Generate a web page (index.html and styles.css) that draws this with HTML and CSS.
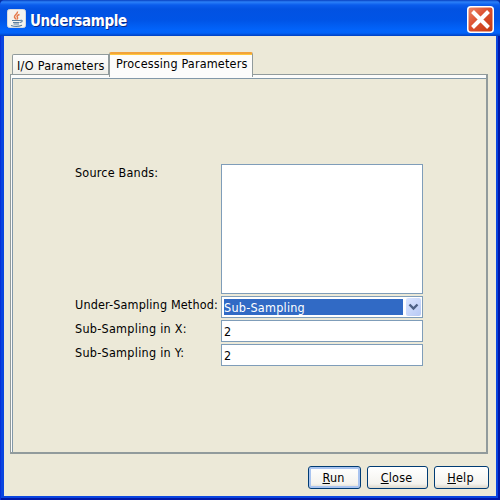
FILE: index.html
```html
<!DOCTYPE html>
<html lang="en">
<head>
<meta charset="utf-8">
<title>Undersample</title>
<link rel="stylesheet" href="styles.css">
</head>
<body>
<div class="window">
  <header class="titlebar">
    <svg class="app-icon" viewBox="0 0 19 19" width="19" height="19">
      <rect x=".5" y=".5" width="18" height="18" rx="2" fill="#f4f3ef" stroke="#d5d9df"/>
      <path d="M10.500 2.500C11 5 7 6 7.500 8c.2 1 1.200 1.500 1.200 2.500M12.500 5.500C10 6.500 9.500 7.500 10.500 8.500c.5.8-.2 1.500-.8 2" fill="none" stroke="#e5794a" stroke-width="1.500"/>
      <path d="M5 11.500h8M13 11.500c3-1 3 1.500 0 2M6 13.500h6.500M6.500 15h5.500M4 16.500c3 1 8 1 11-.3" fill="none" stroke="#5c7f9e" stroke-width="1.100"/>
    </svg>
    <h1 class="title">Undersample</h1>
    <button class="close" aria-label="Close window">
      <svg viewBox="0 0 27 27" width="27" height="27">
        <defs><linearGradient id="red" x2="1" y2="1"><stop stop-color="#ed8a6c"/><stop offset=".45" stop-color="#dc5030"/><stop offset="1" stop-color="#c23a10"/></linearGradient></defs>
        <rect x=".75" y=".75" width="25.500" height="25.500" rx="3" fill="url(#red)" stroke="#fff" stroke-width="1.500"/>
        <path d="M5.500 5.500l16 16M21.500 5.500l-16 16" stroke="#fff" stroke-width="4"/>
      </svg>
    </button>
  </header>
  <main class="content">
    <nav class="tabs">
      <div class="tab">I/O Parameters</div>
      <div class="tab active">Processing Parameters</div>
    </nav>
    <section class="pane">
      <form class="form">
        <label>Source Bands:</label>
        <div class="field list"></div>
        <label class="method">Under-Sampling Method:</label>
        <div class="field combo">
          <span class="selected">Sub-Sampling</span>
          <span class="arrow"><svg viewBox="0 0 15 18" width="15" height="18"><path d="M3.500 6.500l4 4 4-4" fill="none" stroke="#4d6185" stroke-width="2.400"/></svg></span>
        </div>
        <label class="axis">Sub-Sampling in X:</label>
        <div class="field">2</div>
        <label class="axis">Sub-Sampling in Y:</label>
        <div class="field">2</div>
      </form>
    </section>
    <footer class="actions">
      <button class="btn run default"><u>R</u>un</button>
      <button class="btn shut"><u>C</u>lose</button>
      <button class="btn help"><u>H</u>elp</button>
    </footer>
  </main>
</div>
</body>
</html>
```
FILE: styles.css
```css
* { box-sizing: border-box; }
body { margin: 0; background: #0831a0; font: 12.5px/16px "DejaVu Sans Condensed", "DejaVu Sans", sans-serif; font-stretch: condensed; color: #000; }
.window {
  width: 500px; height: 500px; display: flex; flex-direction: column;
  background: #0a45e0; border-radius: 5px 5px 0 0; overflow: hidden;
  padding: 0 4px 4px;
  box-shadow: inset 1px 0 #0831d9, inset -2px 0 #0018a8, inset 0 -2px #0018a8;
}
.titlebar {
  height: 36px; margin: 0 -4px; padding: 4px 6px 0 7px; display: flex; align-items: center;
  background: linear-gradient(#0840c0 0, #2b80f8 2px, #0a5cec 5px, #0252e2 9px, #0054e6 20px, #0264fb 30px, #0263f8 33px, #003fc0 36px);
}
.app-icon { margin: -3px 0 0 0; }
.title { margin: 1px 0 0 4px; font: bold 15px/20px "DejaVu Sans Condensed", "DejaVu Sans", sans-serif; font-stretch: condensed; letter-spacing: -.35px; color: #fff; text-shadow: 1px 1px #0a2b88; flex: 1; }
.close { width: 27px; height: 27px; margin-top: -1px; padding: 0; border: 0; background: none; }
.close svg { display: block; }
.content { flex: 1; background: #ece9d8; padding: 16px 8px 0 6px; display: flex; flex-direction: column; }
.tabs { height: 22px; display: flex; align-items: flex-end; padding-left: 2px; }
.tab { width: 97px; height: 20px; padding: 3px 0 0 4px; border: 1px solid #919b9c; border-bottom: 0; border-radius: 2px 0 0; background: linear-gradient(#fefefe, #f0efe8); white-space: nowrap; letter-spacing: .28px; }
.tab.active { position: relative; width: 144px; height: 25px; margin-bottom: -3px; padding: 1px 0 0 6px; border-top: 2px solid #f2a33a; border-radius: 2px 2px 0 0; background: linear-gradient(#ffc73c 1px, #fcfcfb 1px); padding-top: 2px; letter-spacing: .17px; }
.pane { height: 380px; border: 1px solid #919b9c; border-right: 2px solid #919b9c; border-bottom: 2px solid #919b9c; background: #ece9d8; box-shadow: inset 1px 0 #fcfcfb, inset 0 3px #fcfcfb, inset 2px 0 #8298a8, inset 0 4px #8298a8; padding: 89px 0 0 64px; }
.form { display: grid; grid-template-columns: 146px 202px; grid-template-rows: 130px 22px 22px 22px; row-gap: 2px; }
.form label { white-space: nowrap; padding-top: 1px; letter-spacing: .2px; }
.form .method { letter-spacing: .16px; }
.form .axis { letter-spacing: .27px; }
.field { border: 1px solid #7f9db9; background: #fff; padding: 3px 0 0 2px; }
.combo { display: flex; padding: 2px 1px 2px 2px; }
.selected { width: 179px; height: 16px; background: #316ac5; color: #fff; line-height: 17px; margin-right: 3px; letter-spacing: .24px; }
.arrow { width: 15px; height: 18px; margin-top: -1px; background: linear-gradient(135deg, #dce6ff, #b7c9f5); border-radius: 2px; }
.arrow svg { display: block; }
.actions { display: flex; gap: 6px; justify-content: flex-end; margin: 12px -1px 0 0; }
.btn { height: 23px; padding: 1px 2px 0 0; border: 1px solid #003c74; border-radius: 3px; background: linear-gradient(#fff, #f4f3ee 80%, #dcd7cb); font: inherit; letter-spacing: .2px; color: #000; }
.run { width: 53px; } .shut { width: 61px; } .help { width: 55px; }
.default { box-shadow: inset 0 0 0 2px #a9c4f0; }
u { text-underline-offset: 1px; }
```
